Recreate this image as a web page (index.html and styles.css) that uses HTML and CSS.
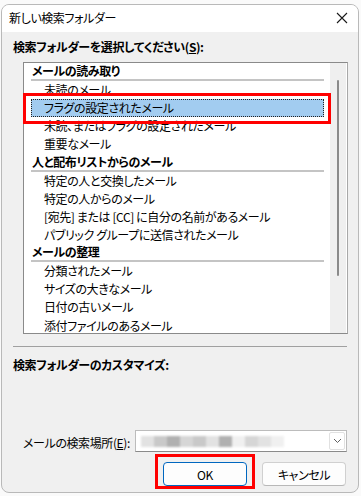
FILE: index.html
```html
<!doctype html>
<html lang="ja">
<head>
    <meta charset="UTF-8">
    <meta name="viewport" content="width=device-width, initial-scale=1.0">
    <title>新しい検索フォルダー</title>
    <link rel="stylesheet" href="styles.css">
</head>
<body>
    <div class="window">
        <div class="titlebar">
            <span class="title">新しい検索フォルダー</span>
            <svg class="close" width="12" height="12" viewBox="0 0 12 12">
                <path d="M1 1 L11 11 M11 1 L1 11" stroke="#1a1a1a" stroke-width="1.1" fill="none"/>
            </svg>
        </div>
        <div class="content">
            <div class="label">検索フォルダーを選択してください(<u>S</u>):</div>
            <div class="listbox">
                <div class="list">
                    <div class="group">メールの読み取り</div>
                    <div class="item">未読のメール</div>
                    <div class="item selected"><span>フラグの設定されたメール</span></div>
                    <div class="item">未読、またはフラグの設定されたメール</div>
                    <div class="item">重要なメール</div>
                    <div class="group">人と配布リストからのメール</div>
                    <div class="item">特定の人と交換したメール</div>
                    <div class="item">特定の人からのメール</div>
                    <div class="item">[宛先] または [CC] に自分の名前があるメール</div>
                    <div class="item">パブリック グループに送信されたメール</div>
                    <div class="group">メールの整理</div>
                    <div class="item">分類されたメール</div>
                    <div class="item">サイズの大きなメール</div>
                    <div class="item">日付の古いメール</div>
                    <div class="item">添付ファイルのあるメール</div>
                </div>
                <div class="scrollbar"><div class="thumb"></div></div>
            </div>
            <div class="sep"></div>
            <div class="label">検索フォルダーのカスタマイズ:</div>
            <div class="location">
                <span class="loc-label">メールの検索場所(<u>E</u>):</span>
                <div class="combo">
                    <div class="blurred">
                        <span class="b1"></span><span class="b2"></span><span class="b3"></span><span class="b4"></span><span class="b2"></span><span class="b1"></span><span class="b3"></span><span class="b5"></span><span class="b4"></span><span class="b1"></span><span class="b5"></span>
                    </div>
                    <div class="drop">
                        <svg width="9" height="6" viewBox="0 0 9 6"><path d="M1 1 L4.5 4.5 L8 1" stroke="#606060" stroke-width="1" fill="none"/></svg>
                    </div>
                </div>
            </div>
            <div class="buttons">
                <button class="btn default">OK</button>
                <button class="btn">キャンセル</button>
            </div>
        </div>
        <div class="mark mark-list"></div>
        <div class="mark mark-ok"></div>
    </div>
</body>
</html>
```
FILE: styles.css
```css
* {
    box-sizing: border-box;
}

body {
    margin: 0;
    background-color: #fafafa;
    font-family: "Noto Sans CJK JP", "Noto Sans", sans-serif;
    font-size: 12px;
    font-feature-settings: "palt";
    letter-spacing: -0.4px;
    color: #000000;
}

.window {
    position: relative;
    margin: 4px 0 0 1px;
    width: 358px;
    height: 489px;
    background-color: #f0f0f0;
    border: 1px solid #b9b9b9;
    border-radius: 8px;
    overflow: hidden;
}

.titlebar {
    display: flex;
    align-items: center;
    justify-content: space-between;
    height: 27px;
    padding: 0 10px 2px 7px;
    background-color: #ffffff;
}

.title {
    line-height: 16px;
}

.content {
    padding: 7px 0 0 11px;
}

.label {
    font-weight: bold;
    line-height: 16px;
}

.listbox {
    display: flex;
    margin: 7px 0 0 10px;
    width: 325px;
    height: 272px;
    background-color: #ffffff;
    border: 1px solid #8a8a8a;
    border-right-color: #a8a8a8;
}

.list {
    flex: 1;
    padding: 0 6px 0 7px;
}

.group {
    height: 18px;
    padding-left: 1px;
    font-weight: bold;
    line-height: 15px;
    border-bottom: 2px solid #c4c4c4;
}

.item {
    height: 18.15px;
    padding-left: 13px;
    line-height: 18px;
    white-space: nowrap;
}

.item.selected {
    background-color: #a2ccf0;
    outline: 1px dotted #222222;
    outline-offset: -1px;
}

.scrollbar {
    width: 16px;
    margin: 0 1px 0 0;
    background-color: #efefef;
    padding-top: 17px;
}

.thumb {
    width: 2px;
    height: 196px;
    margin-left: 7px;
    background-color: #8a8a8a;
    border-radius: 1px;
}

.sep {
    margin: 12px 0 0 0;
    width: 334px;
    height: 1px;
    background-color: #a0a0a0;
}

.content > .sep + .label {
    margin-top: 10px;
}

.location {
    display: flex;
    align-items: center;
    margin: 57px 0 0 10px;
}

.loc-label {
    width: 112px;
    padding-top: 3px;
}

.combo {
    display: flex;
    align-items: center;
    justify-content: space-between;
    width: 212px;
    height: 22px;
    background-color: #ffffff;
    border: 1px solid #bcbcbc;
    border-bottom-color: #8a8a8a;
    padding: 0 1px 0 5px;
}

.blurred {
    display: flex;
    height: 11px;
    filter: blur(1px);
}

.blurred span {
    width: 13px;
    height: 11px;
}

.b1 { background-color: #e2e2e2; }
.b2 { background-color: #c9c9c9; }
.b3 { background-color: #b0b0b0; }
.b4 { background-color: #d6d6d6; }
.b5 { background-color: #f0f0f0; }

.drop {
    display: flex;
    align-items: center;
    justify-content: center;
    width: 16px;
    height: 18px;
    border: 1px solid #e1e1e1;
    border-radius: 2px;
}

.buttons {
    display: flex;
    gap: 15px;
    margin: 10px 0 0 150px;
}

.btn {
    width: 84px;
    height: 24px;
    padding: 0;
    background-color: #fdfdfd;
    border: 1px solid #d0d0d0;
    border-bottom-color: #b8b8b8;
    border-radius: 4px;
    font-family: inherit;
    font-size: 12px;
    font-feature-settings: "palt";
    letter-spacing: -0.4px;
    color: #000000;
}

.btn.default {
    border: 1px solid #0067c0;
}

.mark {
    position: absolute;
    border: 3px solid #ff0000;
}

.mark-list {
    left: 21px;
    top: 88px;
    width: 308px;
    height: 31px;
}

.mark-ok {
    left: 153px;
    top: 449px;
    width: 100px;
    height: 35px;
}
```
